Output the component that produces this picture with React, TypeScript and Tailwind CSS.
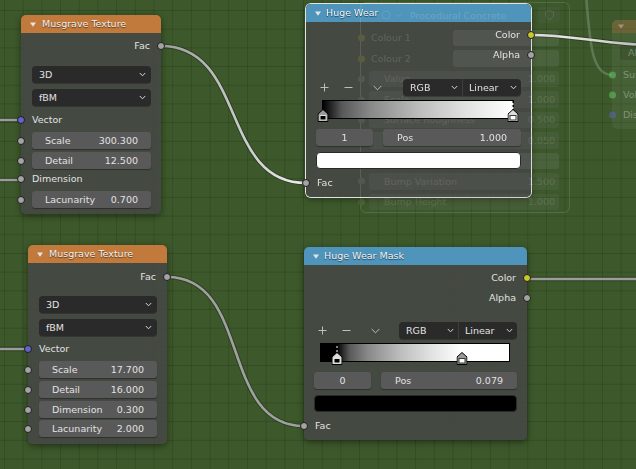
import React from "react";

type SockColor = "gray" | "purple" | "yellow" | "green";
const sockCls: Record<SockColor, string> = {
  gray: "bg-[#a3a3a3]",
  purple: "bg-[#6363c8]",
  yellow: "bg-[#c9c92b]",
  green: "bg-[#63c763]",
};

function Socket({ side, color = "gray" }: { side: "l" | "r"; color?: SockColor }) {
  const pos = side === "l" ? "left-[-4px]" : "right-[-4px]";
  return (
    <span
      className={`absolute top-1/2 -translate-y-1/2 w-[8px] h-[8px] rounded-full border border-[#1e1e1e] ${pos} ${sockCls[color]}`}
    />
  );
}

function Chevron() {
  return (
    <svg width="7" height="5" viewBox="0 0 7 5" className="shrink-0">
      <path d="M0.8 1 L3.5 3.8 L6.2 1" fill="none" stroke="#d6d6d6" strokeWidth="1" />
    </svg>
  );
}

function Dropdown({ label }: { label: string }) {
  return (
    <div className="h-[17px] rounded-[4px] bg-[#2a2a2a] flex items-center justify-between pl-[7px] pr-[5px] shadow-[0_1px_0_rgba(0,0,0,0.25)]">
      <span>{label}</span>
      <Chevron />
    </div>
  );
}

function NumField({ label, value }: { label: string; value: string }) {
  return (
    <div className="h-[17px] rounded-[3px] bg-[#595959] flex items-center justify-between px-[13px] shadow-[0_1px_1px_rgba(0,0,0,0.35)]">
      <span>{label}</span>
      <span>{value}</span>
    </div>
  );
}

function FieldRow({ label, value }: { label: string; value: string }) {
  return (
    <div className="relative pl-[11px] pr-[10px]">
      <NumField label={label} value={value} />
      <Socket side="l" />
    </div>
  );
}

function Header({ title, color }: { title: string; color: string }) {
  return (
    <div className={`h-[18px] rounded-t-[5px] flex items-center pl-[9px] ${color}`}>
      <svg width="6" height="5" viewBox="0 0 6 5" className="mr-[6px] mt-[1px]">
        <path d="M0 0.5 H6 L3 4.8 Z" fill="#e4e4e4" />
      </svg>
      <span className="text-[#f2f2f2] [text-shadow:0_1px_1px_rgba(0,0,0,0.6)]">{title}</span>
    </div>
  );
}

function Musgrave({
  className,
  scale,
  detail,
  dimension,
  lac,
  dimConnected,
}: {
  className: string;
  scale: string;
  detail: string;
  dimension: string;
  lac: string;
  dimConnected: boolean;
}) {
  return (
    <div className={`absolute rounded-[5px] bg-[rgba(70,71,70,0.86)] shadow-[0_2px_7px_rgba(0,0,0,0.45)] ${className}`}>
      <Header title="Musgrave Texture" color="bg-[#c27a3c]" />
      <div className={dimConnected ? "h-[3px]" : "h-[4px]"} />
      <div className="relative h-[20px] flex items-center justify-end pr-[11px]">
        <span>Fac</span>
        <Socket side="r" />
      </div>
      <div className={dimConnected ? "h-[10px]" : "h-[9px]"} />
      <div className="pl-[11px] pr-[10px]">
        <Dropdown label="3D" />
      </div>
      <div className="h-[6px]" />
      <div className="pl-[11px] pr-[10px]">
        <Dropdown label="fBM" />
      </div>
      <div className={dimConnected ? "h-[4px]" : "h-[3px]"} />
      <div className="relative h-[20px] flex items-center pl-[11px]">
        <span>Vector</span>
        <Socket side="l" color="purple" />
      </div>
      <div className="h-[2px]" />
      <FieldRow label="Scale" value={scale} />
      <div className="h-[3px]" />
      <FieldRow label="Detail" value={detail} />
      {dimConnected ? (
        <>
          <div className="relative h-[20px] flex items-center pl-[11px]">
            <span>Dimension</span>
            <Socket side="l" />
          </div>
          <div className="h-[2px]" />
        </>
      ) : (
        <>
          <div className="h-[3px]" />
          <FieldRow label="Dimension" value={dimension} />
          <div className="h-[2px]" />
        </>
      )}
      <FieldRow label="Lacunarity" value={lac} />
      <div className={dimConnected ? "h-[6px]" : "h-[7px]"} />
    </div>
  );
}

function Marker({ fill, left, active }: { fill: "black" | "white"; left: string; active: boolean }) {
  return (
    <>
      {active && (
        <div
          className="absolute top-0 h-[9px] w-[1px] -translate-x-1/2 bg-[repeating-linear-gradient(to_bottom,#000_0px,#000_2px,#fff_2px,#fff_4px)]"
          style={{ left }}
        />
      )}
      <svg
        width="11"
        height="13"
        viewBox="0 0 11 13"
        className="absolute top-[8px] -translate-x-1/2"
        style={{ left }}
      >
        <path d="M0.5 12.5 V5 L5.5 0.5 L10.5 5 V12.5 Z" fill={active ? "#dcdcdc" : "#9a9a9a"} stroke="#000" />
        <rect
          x="2.5"
          y="6.5"
          width="6"
          height="4.5"
          fill={fill === "black" ? "#000" : "#fff"}
          stroke={fill === "black" ? "#e0e0e0" : "#3a3a3a"}
        />
      </svg>
    </>
  );
}

function PlusIcon() {
  return (
    <svg width="9" height="9" viewBox="0 0 9 9">
      <path d="M4.5 0.5 V8.5 M0.5 4.5 H8.5" stroke="#bdbdbd" strokeWidth="1" />
    </svg>
  );
}
function MinusIcon() {
  return (
    <svg width="9" height="9" viewBox="0 0 9 9">
      <path d="M0.5 4.5 H8.5" stroke="#bdbdbd" strokeWidth="1" />
    </svg>
  );
}
function DownIcon() {
  return (
    <svg width="9" height="6" viewBox="0 0 9 6">
      <path d="M0.7 1 L4.5 4.8 L8.3 1" fill="none" stroke="#bdbdbd" strokeWidth="1" />
    </svg>
  );
}

function ColorRamp({
  className,
  title,
  index,
  pos,
  gradCls,
  stops,
  swatchCls,
  transparentBg,
}: {
  className: string;
  title: string;
  index: string;
  pos: string;
  gradCls: string;
  stops: { left: string; fill: "black" | "white"; active: boolean }[];
  swatchCls: string;
  transparentBg: boolean;
}) {
  return (
    <div
      className={`absolute rounded-[5px] ${
        transparentBg ? "" : "bg-[rgba(70,71,70,0.86)] shadow-[0_2px_7px_rgba(0,0,0,0.45)]"
      } ${className}`}
    >
      <div className={`h-[18px] rounded-t-[5px] flex items-center pl-[9px] ${transparentBg ? "" : "bg-[#4f95bb]"}`}>
        <svg width="6" height="5" viewBox="0 0 6 5" className="mr-[5px] mt-[1px]">
          <path d="M0 0.5 H6 L3 4.8 Z" fill="#e4e4e4" />
        </svg>
        <span className="text-[#f2f2f2] [text-shadow:0_1px_1px_rgba(0,0,0,0.6)]">{title}</span>
      </div>
      <div className="h-[3px]" />
      <div className="relative h-[20px] flex items-center justify-end pr-[11px]">
        <span>Color</span>
        <Socket side="r" color="yellow" />
      </div>
      <div className="relative h-[20px] flex items-center justify-end pr-[11px]">
        <span>Alpha</span>
        <Socket side="r" />
      </div>
      <div className="h-[14px]" />
      <div className="h-[17px] flex items-center pl-[14px] pr-[10px]">
        <PlusIcon />
        <div className="ml-[15px]">
          <MinusIcon />
        </div>
        <div className="ml-[20px] flex items-center">
          <DownIcon />
        </div>
        <div className="ml-auto w-[118px] h-[17px] rounded-[4px] bg-[#2a2a2a] flex items-stretch shadow-[0_1px_0_rgba(0,0,0,0.25)]">
          <div className="flex-1 flex items-center justify-between pl-[7px] pr-[4px]">
            <span>RGB</span>
            <Chevron />
          </div>
          <div className="w-[1px] bg-[#3e3e3e]" />
          <div className="flex-1 flex items-center justify-between pl-[6px] pr-[4px]">
            <span>Linear</span>
            <Chevron />
          </div>
        </div>
      </div>
      <div className="h-[4px]" />
      <div className={`relative ml-[16px] mr-[17px] h-[19px] border border-black ${gradCls}`}>
        {stops.map((s, i) => (
          <Marker key={i} fill={s.fill} left={s.left} active={s.active} />
        ))}
      </div>
      <div className="h-[10px]" />
      <div className="h-[17px] flex gap-[10px] pl-[10px] pr-[10px]">
        <div className="w-[57px] rounded-[3px] bg-[#595959] flex items-center justify-center shadow-[0_1px_1px_rgba(0,0,0,0.35)]">
          {index}
        </div>
        <div className="flex-1 rounded-[3px] bg-[#595959] flex items-center justify-between px-[14px] shadow-[0_1px_1px_rgba(0,0,0,0.35)]">
          <span>Pos</span>
          <span>{pos}</span>
        </div>
      </div>
      <div className="h-[6px]" />
      <div className={`mx-[10px] h-[17px] rounded-[4px] border border-[#2a2a2a] ${swatchCls}`} />
      <div className="h-[4px]" />
      <div className="relative h-[20px] flex items-center pl-[11px]">
        <span>Fac</span>
        <Socket side="l" />
      </div>
      <div className="h-[4px]" />
    </div>
  );
}

function Links() {
  return (
    <svg className="absolute inset-0" width="636" height="469" viewBox="0 0 636 469">
      <defs>
        <linearGradient id="lk1" gradientUnits="userSpaceOnUse" x1="161" y1="0" x2="306" y2="0">
          <stop offset="0" stopColor="#9c9c9c" />
          <stop offset="1" stopColor="#eeeeee" />
        </linearGradient>
        <linearGradient id="lk2" gradientUnits="userSpaceOnUse" x1="531" y1="0" x2="636" y2="0">
          <stop offset="0" stopColor="#f0f0f0" />
          <stop offset="1" stopColor="#c8c8c8" />
        </linearGradient>
      </defs>
      <g fill="none" strokeLinecap="round">
        {[
          "M161 46 C247 46, 220 183, 306 183",
          "M167 277 C252 277, 219 426, 304 426",
          "M531 35 C580 35, 600 46, 700 47",
          "M527 279 L640 279",
          "M-5 120 L21 120",
          "M-5 180 L21 180",
          "M-5 349 L28 349",
        ].map((d, i) => (
          <path key={"s" + i} d={d} stroke="rgba(0,0,0,0.28)" strokeWidth="4.5" />
        ))}
        <path d="M161 46 C247 46, 220 183, 306 183" stroke="url(#lk1)" strokeWidth="2.6" />
        <path d="M167 277 C252 277, 219 426, 304 426" stroke="#a0a0a0" strokeWidth="2.6" />
        <path d="M531 35 C580 35, 600 46, 700 47" stroke="url(#lk2)" strokeWidth="2.6" />
        <path d="M527 279 L640 279" stroke="#9c9c9c" strokeWidth="2.6" />
        <path d="M-5 120 L21 120" stroke="#9c9c9c" strokeWidth="2.6" />
        <path d="M-5 180 L21 180" stroke="#9c9c9c" strokeWidth="2.6" />
        <path d="M-5 349 L28 349" stroke="#9c9c9c" strokeWidth="2.6" />
      </g>
    </svg>
  );
}

function GhostRow({
  label,
  value,
  sock,
  kind,
}: {
  label: string;
  value?: string;
  sock: "yellow" | "gray";
  kind: "color" | "num" | "blank";
}) {
  return (
    <div className="relative h-[20.5px] flex items-center">
      <span
        className={`absolute left-[-3px] top-1/2 -translate-y-1/2 w-[7px] h-[7px] rounded-full ${
          sock === "yellow" ? "bg-[#c9c92b]" : "bg-[#a3a3a3]"
        }`}
      />
      {kind === "color" ? (
        <>
          <span className="ml-[10px]">{label}</span>
          <div className="absolute left-[92px] right-[10px] top-[2px] bottom-[2px] rounded-[3px] bg-[#9a9a9a]" />
        </>
      ) : kind === "blank" ? (
        <div className="absolute left-[92px] right-[10px] top-[2px] bottom-[2px] rounded-[3px] bg-[#9a9a9a]" />
      ) : (
        <div className="absolute left-[8px] right-[10px] top-[2px] bottom-[2px] rounded-[3px] bg-[#7a7a7a] flex items-center justify-between pl-[15px] pr-[4px]">
          <span>{label}</span>
          <span>{value}</span>
        </div>
      )}
    </div>
  );
}

function Ghosts() {
  return (
    <div className="absolute inset-0 pointer-events-none text-[#f0f0f0]">
      <svg className="absolute inset-0 opacity-[0.22]" width="636" height="469" viewBox="0 0 636 469">
        <path d="M586 -5 C590 45, 592 75, 612 75" fill="none" stroke="#e0e0e0" strokeWidth="2.5" />
      </svg>
      <div className="absolute left-[360px] top-[2px] w-[210px] h-[211px] rounded-[6px] border border-[rgba(225,235,215,0.9)] opacity-[0.16] flex flex-col">
        <div className="h-[25px] flex items-center pl-[20px] gap-[4px]">
          <svg width="10" height="10" viewBox="0 0 10 10">
            <circle cx="5" cy="5" r="4" fill="none" stroke="#ddd" />
          </svg>
          <Chevron />
          <span className="ml-[4px]">Procedural Concrete</span>
          <div className="ml-auto mr-[9px] w-[22px] h-[16px] rounded-[3px] bg-[#6a6a6a] flex items-center justify-center">
            <svg width="9" height="10" viewBox="0 0 9 10">
              <path d="M4.5 0.5 L8.5 2 V5 C8.5 7.5 4.5 9.5 4.5 9.5 C4.5 9.5 0.5 7.5 0.5 5 V2 Z" fill="none" stroke="#ddd" />
            </svg>
          </div>
        </div>
        <GhostRow label="Colour 1" sock="yellow" kind="color" />
        <GhostRow label="Colour 2" sock="yellow" kind="color" />
        <GhostRow label="Value" value="1.000" sock="gray" kind="num" />
        <GhostRow label="Scale" value="1.000" sock="gray" kind="num" />
        <GhostRow label="Surface Roughness" value="0.500" sock="gray" kind="num" />
        <GhostRow label="" value="0.050" sock="gray" kind="num" />
        <GhostRow label="" sock="gray" kind="blank" />
        <GhostRow label="Bump Variation" value="1.500" sock="gray" kind="num" />
        <GhostRow label="Bump Height" value="1.000" sock="gray" kind="num" />
      </div>
      <div className="absolute left-[612px] top-[20px] w-[110px] h-[109px] rounded-[5px] bg-[rgba(150,160,140,0.12)]">
        <div className="h-[13px] rounded-t-[5px] bg-[rgba(176,106,58,0.35)] flex items-center pl-[6px]">
          <svg width="6" height="5" viewBox="0 0 6 5" className="opacity-40">
            <path d="M0 0.5 H6 L3 4.8 Z" fill="#e4e4e4" />
          </svg>
        </div>
        <div className="h-[12px]" />
        <div className="ml-[8px] w-[90px] h-[15px] rounded-[4px] bg-[rgba(0,0,0,0.12)] flex items-center pl-[8px] text-[rgba(240,240,240,0.35)]">
          All
        </div>
        <div className="relative h-[20px] mt-[5px] flex items-center pl-[11px] text-[rgba(240,240,240,0.35)]">
          <span>Surface</span>
          <span className="absolute left-[-3px] top-1/2 -translate-y-1/2 w-[7px] h-[7px] rounded-full bg-[rgba(99,199,99,0.55)]" />
        </div>
        <div className="relative h-[20px] flex items-center pl-[11px] text-[rgba(240,240,240,0.35)]">
          <span>Volume</span>
          <span className="absolute left-[-3px] top-1/2 -translate-y-1/2 w-[7px] h-[7px] rounded-full bg-[rgba(99,199,99,0.55)]" />
        </div>
        <div className="relative h-[20px] flex items-center pl-[11px] text-[rgba(240,240,240,0.35)]">
          <span>Displacement</span>
          <span className="absolute left-[-3px] top-1/2 -translate-y-1/2 w-[7px] h-[7px] rounded-full bg-[rgba(99,99,199,0.45)]" />
        </div>
      </div>
    </div>
  );
}

export default function App() {
  return (
    <div className="relative w-[636px] h-[469px] overflow-hidden font-['DejaVu_Sans',sans-serif] text-[9.5px] leading-none text-[#e2e2e2] bg-[#3d592b] bg-[linear-gradient(to_right,rgba(0,0,0,0.14)_1px,transparent_1px),linear-gradient(to_bottom,rgba(0,0,0,0.14)_1px,transparent_1px)] bg-[size:18.7px_18.7px] bg-[position:4px_10px]">
      <Links />
      <Musgrave
        className="left-[21px] top-[15px] w-[140px]"
        scale="300.300"
        detail="12.500"
        dimension=""
        lac="0.700"
        dimConnected={true}
      />
      <Musgrave
        className="left-[28px] top-[245px] w-[139px]"
        scale="17.700"
        detail="16.000"
        dimension="0.300"
        lac="2.000"
        dimConnected={false}
      />
      <div className="absolute left-[306px] top-[4px] w-[225px] h-[193px] rounded-[5px] bg-[rgba(70,71,70,0.86)] shadow-[0_2px_7px_rgba(0,0,0,0.45)] ring-1 ring-[#e2e2e2]">
        <div className="h-[18px] rounded-t-[5px] bg-[#4f95bb]" />
      </div>
      <Ghosts />
      <ColorRamp
        className="left-[306px] top-[4px] w-[225px]"
        title="Huge Wear"
        index="1"
        pos="1.000"
        gradCls="bg-[linear-gradient(to_right,#000_0%,#595959_10%,#898989_25%,#bcbcbc_50%,#e1e1e1_75%,#fff_100%)]"
        stops={[
          { left: "0%", fill: "black", active: false },
          { left: "100%", fill: "white", active: true },
        ]}
        swatchCls="bg-white"
        transparentBg={true}
      />
      <ColorRamp
        className="left-[304px] top-[247px] w-[223px]"
        title="Huge Wear Mask"
        index="0"
        pos="0.079"
        gradCls="bg-[linear-gradient(to_right,#000_0%,#000_8.5%,#595959_15.2%,#898989_25.1%,#bcbcbc_41.8%,#e1e1e1_58.4%,#fff_75%,#fff_100%)]"
        stops={[
          { left: "8.5%", fill: "black", active: true },
          { left: "75%", fill: "white", active: false },
        ]}
        swatchCls="bg-black"
        transparentBg={false}
      />
    </div>
  );
}
